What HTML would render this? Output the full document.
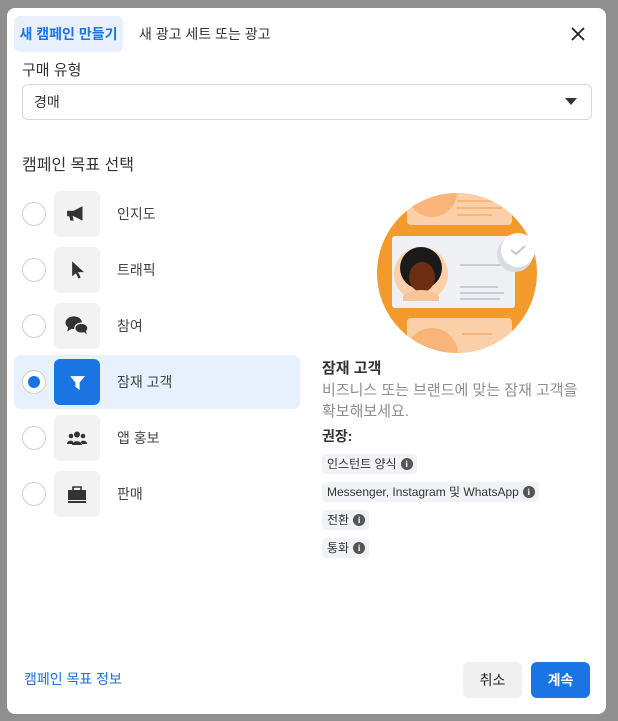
<!DOCTYPE html>
<html><head><meta charset="utf-8"><style>
*{box-sizing:border-box;margin:0;padding:0}
body{width:618px;height:721px;background:#8f8f8f;font-family:"Liberation Sans","Noto Sans CJK KR",sans-serif;position:relative;overflow:hidden;color:#1c1e21}
.modal{position:absolute;left:7px;top:8px;width:599px;height:706px;background:#fff;border-radius:8px}
.a{position:absolute}
.tab{left:7px;top:8px;width:109px;height:36px;background:#e7f0fc;border-radius:6px;color:#1b74e4;font-weight:bold;font-size:14px;line-height:36px;text-align:center}
.row{position:absolute;left:7px;width:286px;height:54px;border-radius:7px}
.radio{position:absolute;left:8px;top:15px;width:24px;height:24px;border:1px solid #ccd0d5;border-radius:50%;background:#fff}
.ib{position:absolute;left:40px;top:4px;width:46px;height:46px;border-radius:6px;background:#f2f2f2;display:flex;align-items:center;justify-content:center}
.lb{position:absolute;left:103px;top:0;line-height:54px;font-size:14px;color:#444}
.chip{position:absolute;left:315px;height:20px;background:#f0f2f5;border-radius:4px;font-size:12px;line-height:20px;padding:0 4px 0 5px;color:#333;display:flex;align-items:center;gap:4px}
.i{width:12px;height:12px;border-radius:50%;background:#555;color:#fff;font-size:9px;font-weight:bold;line-height:12px;text-align:center;font-family:"Liberation Serif",serif}
</style></head><body>
<div class="modal">
<div class="a tab">새 캠페인 만들기</div>
<div class="a" style="left:132px;top:8px;line-height:36px;font-size:14px;color:#333">새 광고 세트 또는 광고</div>
<svg class="a" style="left:564px;top:19px" width="14" height="14"><path d="M1 1L13 13M13 1L1 13" stroke="#222" stroke-width="1.8"/></svg>
<div class="a" style="left:15px;top:51px;font-size:15px;color:#333">구매 유형</div>
<div class="a" style="left:15px;top:76px;width:570px;height:36px;border:1px solid #d5d8dc;border-radius:6px;font-size:14px;line-height:34px;padding-left:11px;color:#333">경매
<svg class="a" style="left:542px;top:13px" width="12" height="8"><path d="M0 0H12L6 7Z" fill="#333"/></svg></div>
<div class="a" style="left:15px;top:143px;font-size:16px;color:#333">캠페인 목표 선택</div>

<div class="row" style="top:179px"><div class="radio"></div><div class="ib"><svg width="22" height="18" viewBox="0 0 20 16"><path d="M1 5h6l8-4v13l-8-4H6l1 4H4l-1-4H1z" fill="#333"/></svg></div><div class="lb">인지도</div></div>
<div class="row" style="top:235px"><div class="radio"></div><div class="ib"><svg width="15" height="20" viewBox="0 0 14 18"><path d="M2 1v14l3.5-3 2.5 5 2-1-2.5-5H13z" fill="#333"/></svg></div><div class="lb">트래픽</div></div>
<div class="row" style="top:291px"><div class="radio"></div><div class="ib"><svg width="24" height="22" viewBox="0 0 22 20"><ellipse cx="8" cy="7" rx="7.5" ry="5.8" fill="#333"/><path d="M3 11l-1 4 5-3z" fill="#333"/><ellipse cx="15" cy="12" rx="6" ry="4.6" fill="#333" stroke="#f2f2f2" stroke-width="1.2"/><path d="M17 15l3 3-1-4z" fill="#333"/></svg></div><div class="lb">참여</div></div>
<div class="row" style="top:347px;background:#e7f0fd"><div class="radio"><div style="position:absolute;left:5px;top:5px;width:12px;height:12px;border-radius:50%;background:#1b74e4"></div></div><div class="ib" style="background:#1b74e4"><svg width="17" height="17" viewBox="0 0 16 16"><path d="M1 2h14l-5 6v7l-4-3V8z" fill="#fff"/></svg></div><div class="lb">잠재 고객</div></div>
<div class="row" style="top:403px"><div class="radio"></div><div class="ib"><svg width="22" height="14" viewBox="0 0 22 14"><circle cx="11" cy="3.5" r="3" fill="#333"/><circle cx="5" cy="5" r="2.3" fill="#333"/><circle cx="17" cy="5" r="2.3" fill="#333"/><path d="M6 14c0-5 10-5 10 0z M1 13c0-4 6-4 6-2v2z M21 13c0-4-6-4-6-2v2z" fill="#333"/></svg></div><div class="lb">앱 홍보</div></div>
<div class="row" style="top:459px"><div class="radio"></div><div class="ib"><svg width="20" height="20" viewBox="0 0 20 20"><path d="M6 6V3h8v3" stroke="#333" stroke-width="1.6" fill="none"/><rect x="1" y="6" width="18" height="10" fill="#333"/><rect x="1" y="17" width="18" height="2" fill="#333"/></svg></div><div class="lb">판매</div></div>

<svg class="a" style="left:370px;top:184px" width="160" height="162" viewBox="0 0 160 162">
<defs><clipPath id="c"><circle cx="80" cy="81" r="80"/></clipPath></defs>
<circle cx="80" cy="81" r="80" fill="#f39a2c"/>
<g clip-path="url(#c)">
<rect x="30" y="0" width="105" height="33" rx="4" fill="#fbd0a8"/>
<circle cx="55" cy="0" r="25" fill="#f7b57a"/>
<rect x="80" y="8" width="40" height="2" fill="#f7b57a"/><rect x="80" y="15" width="45" height="2" fill="#f7b57a"/><rect x="80" y="22" width="35" height="2" fill="#f7b57a"/>
<rect x="30" y="126" width="105" height="40" rx="4" fill="#fbd0a8"/>
<circle cx="55" cy="162" r="26" fill="#f7b57a"/>
<rect x="85" y="141" width="30" height="2" fill="#f7b57a"/>
</g>
<rect x="15" y="44" width="123" height="72" rx="3" fill="#eef0f3"/>
<circle cx="44" cy="82" r="27" fill="#fbd0a8"/>
<circle cx="44" cy="76" r="21" fill="#1a1a1a"/>
<ellipse cx="45" cy="85" rx="13" ry="15" fill="#6b2e12"/>
<path d="M26 104c6-8 30-8 36 0v5H26z" fill="#f7c49a"/>
<rect x="83" y="72" width="45" height="2" fill="#c9ccd1"/><rect x="83" y="94" width="38" height="2" fill="#c9ccd1"/><rect x="83" y="100" width="44" height="2" fill="#c9ccd1"/><rect x="83" y="106" width="40" height="2" fill="#c9ccd1"/>
<circle cx="138" cy="62" r="18" fill="#d8dbe0"/>
<circle cx="141" cy="58" r="17" fill="#fff"/>
<path d="M134 58l5 4 9-8" stroke="#c4c8ce" stroke-width="2" fill="none"/>
</svg>

<div class="a" style="left:315px;top:349px;font-size:15px;font-weight:bold;color:#333">잠재 고객</div>
<div class="a" style="left:315px;top:372px;font-size:15px;line-height:21px;color:#8a8d91">비즈니스 또는 브랜드에 맞는 잠재 고객을<br>확보해보세요.</div>
<div class="a" style="left:315px;top:418px;font-size:14px;font-weight:bold;color:#333">권장:</div>
<div class="chip" style="top:446px">인스턴트 양식 <span class="i">i</span></div>
<div class="chip" style="top:474px">Messenger, Instagram 및 WhatsApp <span class="i">i</span></div>
<div class="chip" style="top:502px">전환 <span class="i">i</span></div>
<div class="chip" style="top:530px">통화 <span class="i">i</span></div>

<div class="a" style="left:17px;top:661px;font-size:14px;color:#216fdb">캠페인 목표 정보</div>
<div class="a" style="left:456px;top:654px;width:59px;height:36px;background:#f0f0f0;border-radius:6px;font-size:14px;line-height:36px;text-align:center;color:#222">취소</div>
<div class="a" style="left:524px;top:654px;width:59px;height:36px;background:#1b74e4;border-radius:6px;font-size:14px;font-weight:bold;line-height:36px;text-align:center;color:#fff">계속</div>
</div>
</body></html>
